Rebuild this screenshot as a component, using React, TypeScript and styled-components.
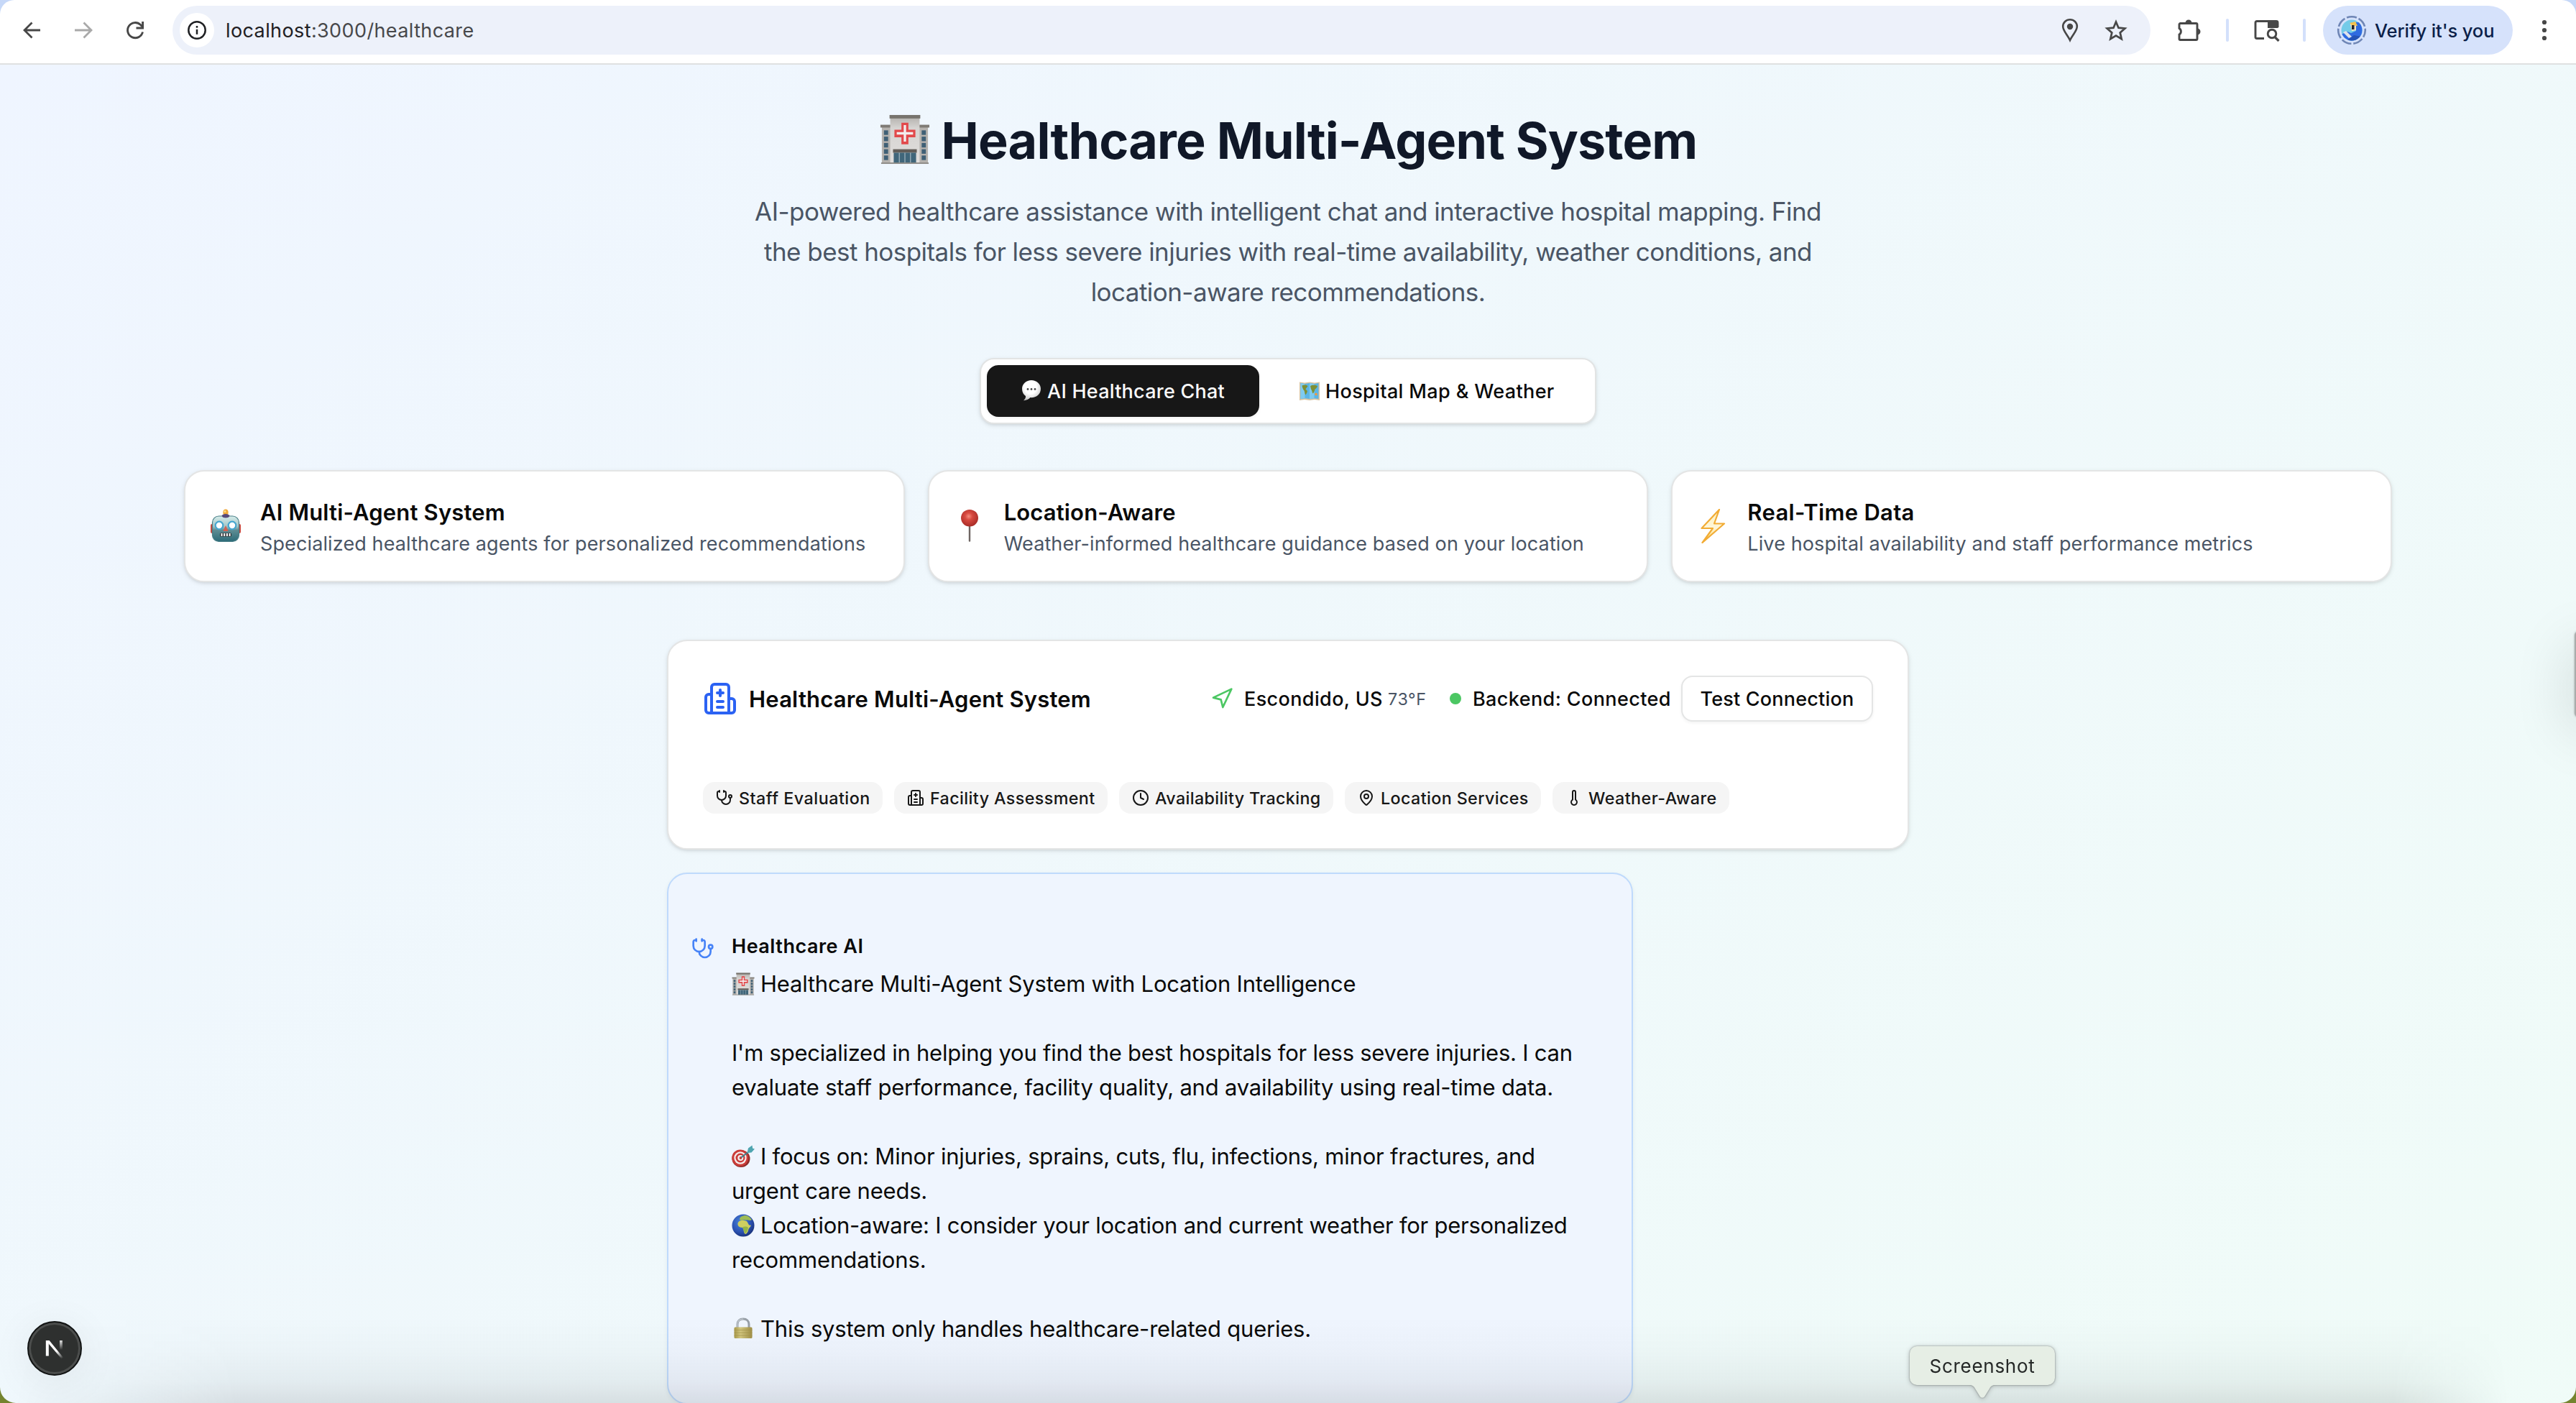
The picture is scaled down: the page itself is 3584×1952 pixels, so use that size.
import React from "react";
import styled, { createGlobalStyle } from "styled-components";
import { Stethoscope, Navigation, Clock, MapPin, Thermometer } from "lucide-react";

const GlobalStyle = createGlobalStyle`
  *, *::before, *::after { box-sizing: border-box; }
  html, body { margin: 0; padding: 0; }
  body {
    width: 3584px;
    height: 1952px;
    overflow: hidden;
    background: #74842f;
    color: #0a0a0a;
    font-family: Inter, "Liberation Sans", Arial, sans-serif;
  }
  h1, h2, h3, p { margin: 0; font-weight: inherit; font-size: inherit; }
  button { font: inherit; color: inherit; }
  svg { display: block; flex: none; }
`;

/* ---------- browser window ---------- */

const Backdrop = styled.div`
  height: 1952px;
  background: linear-gradient(#c6d8f8 0 200px, #74842f 200px);
`;

const Window = styled.div`
  position: relative;
  width: 3584px;
  height: 1952px;
  border-radius: 20px 20px 22px 22px;
  overflow: hidden;
  display: flex;
  flex-direction: column;
`;

const Toolbar = styled.header`
  flex: none;
  height: 90px;
  padding: 8px 40px 12px 0;
  background: #fff;
  border-bottom: 2px solid #dfe1e1;
  display: flex;
  align-items: center;
`;

const NavButtons = styled.div`
  width: 240px;
  padding-left: 28px;
  display: flex;
  align-items: center;
  gap: 40px;
`;

const AddressBar = styled.div`
  width: 2752px;
  height: 68px;
  border-radius: 34px;
  background: #edf1fa;
  padding: 0 32px 0 10px;
  display: flex;
  align-items: center;
`;

const SiteInfo = styled.span`
  width: 48px;
  height: 48px;
  border-radius: 50%;
  background: #fff;
  display: grid;
  place-items: center;
`;

const Url = styled.div`
  flex: 1;
  margin-left: 16px;
  font-size: 27px;
  letter-spacing: 0.39px;
  white-space: pre;
  color: #1f2023;
  span { color: #47484b; }
`;

const AddressActions = styled.div`
  display: flex;
  align-items: center;
  gap: 36px;
`;

const Extensions = styled.div`
  flex: 1;
  padding-left: 36px;
  display: flex;
  align-items: center;
`;

const Separator = styled.span<{ $left: number; $right: number }>`
  width: 4px;
  height: 32px;
  border-radius: 2px;
  margin: 0 ${p => p.$right}px 0 ${p => p.$left}px;
  background: #d3e0fb;
`;

const VerifyPill = styled.div`
  width: 264px;
  height: 68px;
  border-radius: 34px;
  background: #d6e2fb;
  color: #0b1f49;
  padding-left: 19px;
  display: flex;
  align-items: center;
  gap: 11px;
  font-size: 25.5px;
  font-weight: 500;
  letter-spacing: -0.1px;
  white-space: nowrap;
`;

/* ---------- page ---------- */

const Page = styled.main`
  flex: none;
  height: 2900px;
  padding-top: 64px;
  background: linear-gradient(to bottom right, #eff5ff, #f0fdf6);
  display: flex;
  flex-direction: column;
  align-items: center;
`;

const Title = styled.h1`
  height: 80px;
  line-height: 84px;
  margin-bottom: 32px;
  display: flex;
  font-size: 70px;
  font-weight: 700;
  letter-spacing: -0.84px;
  color: #101828;
  white-space: nowrap;
`;

const TitleEmoji = styled.span`
  width: 72px;
  margin-right: 15px;
  display: grid;
  place-items: center;
`;

const Lead = styled.p`
  font-size: 35px;
  line-height: 56px;
  letter-spacing: -0.545px;
  color: #4a5565;
  text-align: center;
  white-space: pre-line;
`;

const Tabs = styled.nav`
  height: 92px;
  margin: 64px 0;
  padding: 8px;
  border: 2px solid #e2e4e4;
  border-radius: 20px;
  background: #fff;
  box-shadow: 0 2px 6px rgba(0, 0, 0, 0.1), 0 2px 4px -2px rgba(0, 0, 0, 0.1);
  display: flex;
  gap: 8px;
`;

const Tab = styled.button<{ $active?: boolean; $width: number; $track: number }>`
  width: ${p => p.$width}px;
  height: 72px;
  padding: 0 0 0 48px;
  border: 0;
  border-radius: 16px;
  background: ${p => (p.$active ? "#171717" : "transparent")};
  color: ${p => (p.$active ? "#fafafa" : "#0a0a0a")};
  box-shadow: ${p => (p.$active ? "0 2px 4px rgba(0, 0, 0, 0.06)" : "none")};
  display: flex;
  align-items: center;
  gap: 8px;
  font-size: 27px;
  font-weight: 500;
  letter-spacing: ${p => p.$track}px;
  white-space: nowrap;
`;

const Features = styled.section`
  width: 3072px;
  display: grid;
  grid-template-columns: repeat(3, 1fr);
  gap: 32px;
  margin-bottom: 80px;
`;

const Card = styled.section`
  border: 2px solid #e4e5e5;
  border-radius: 28px;
  background: #fff;
  box-shadow: 0 2px 6px rgba(0, 0, 0, 0.1), 0 2px 4px -2px rgba(0, 0, 0, 0.1);
`;

const FeatureCard = styled(Card)`
  height: 156px;
  padding: 32px;
  display: flex;
  align-items: center;
  gap: 24px;
`;

const FeatureCopy = styled.div`
  padding-top: 2px;
`;

const FeatureTitle = styled.h3<{ $track: number }>`
  font-size: 31px;
  line-height: 48px;
  font-weight: 600;
  letter-spacing: ${p => p.$track}px;
`;

const FeatureText = styled.p`
  font-size: 27px;
  line-height: 40px;
  letter-spacing: 0.12px;
  color: #4a5565;
  white-space: nowrap;
`;

const Column = styled.div`
  width: 1728px;
  display: flex;
  flex-direction: column;
  gap: 32px;
`;

const SystemCard = styled(Card)`
  height: 292px;
  padding: 48px;
  display: flex;
  flex-direction: column;
  justify-content: space-between;
`;

const SystemHeader = styled.div`
  height: 64px;
  display: flex;
  align-items: center;
  justify-content: space-between;
`;

const Group = styled.div<{ $gap: number }>`
  display: flex;
  align-items: center;
  gap: ${p => p.$gap}px;
`;

const BlueIcon = styled.span`
  color: #2b62f3;
`;

const SystemTitle = styled.h2`
  font-size: 31px;
  font-weight: 600;
  letter-spacing: 0.19px;
  white-space: nowrap;
`;

const Status = styled.span<{ $width: number; $track: number }>`
  width: ${p => p.$width}px;
  font-size: 27px;
  font-weight: 500;
  letter-spacing: ${p => p.$track}px;
  white-space: nowrap;
`;

const Temperature = styled.span`
  width: 54px;
  font-size: 23.3px;
  letter-spacing: 0.6px;
  color: #4a5565;
`;

const Dot = styled.span`
  width: 16px;
  height: 16px;
  margin: 0 16px 0 32px;
  border-radius: 50%;
  background: #4cc763;
`;

const TestButton = styled.button`
  width: 267px;
  height: 64px;
  margin-left: 15px;
  padding: 0;
  border: 2px solid #e4e5e5;
  border-radius: 16px;
  background: #fff;
  box-shadow: 0 2px 4px rgba(0, 0, 0, 0.05);
  font-size: 27px;
  font-weight: 500;
  letter-spacing: 0.2px;
`;

const Badge = styled.span<{ $width: number; $track: number }>`
  width: ${p => p.$width}px;
  height: 44px;
  padding-left: 18px;
  border-radius: 16px;
  background: #f5f5f5;
  color: #171717;
  display: flex;
  align-items: center;
  gap: 8px;
  font-size: 23.3px;
  font-weight: 500;
  letter-spacing: ${p => p.$track}px;
  white-space: nowrap;
`;

const MessageCard = styled.article`
  width: 1344px;
  height: 740px;
  padding: 81px 32px 80px;
  border: 2px solid #bfdafc;
  border-radius: 28px;
  background: #eff5fe;
  box-shadow: 0 2px 6px rgba(0, 0, 0, 0.06);
  display: flex;
  align-items: flex-start;
  gap: 24px;
`;

const MessageIcon = styled.span`
  padding-top: 7px;
  color: #4783f7;
`;

const Author = styled.h3`
  margin-bottom: 8px;
  font-size: 27px;
  line-height: 40px;
  font-weight: 600;
  letter-spacing: 0.5px;
`;

const Line = styled.p<{ $track?: number }>`
  height: 48px;
  display: flex;
  align-items: center;
  gap: 8px;
  font-size: 31px;
  line-height: 48px;
  letter-spacing: ${p => p.$track ?? -0.21}px;
  white-space: nowrap;
`;

/* ---------- overlays ---------- */

const BottomShade = styled.div`
  position: absolute;
  left: 0;
  bottom: 0;
  width: 3584px;
  height: 120px;
  background: linear-gradient(to bottom, rgba(20, 25, 30, 0), rgba(20, 25, 30, 0.02) 40%, rgba(20, 25, 30, 0.055) 75%, rgba(20, 25, 30, 0.11));
  mask-image: linear-gradient(to right, transparent 20px, #000 330px, #000 3330px, transparent 3490px);
`;

const DevBadge = styled.div`
  position: absolute;
  left: 38px;
  top: 1838px;
  width: 76px;
  height: 76px;
  border-radius: 50%;
  border: 2px solid #121414;
  background: #2e302f;
  box-shadow: inset 0 0 0 3px #4c4e4d, 0 8px 60px rgba(0, 0, 0, 0.07);
  display: grid;
  place-items: center;
`;

const SideSliver = styled.div`
  position: absolute;
  left: 3582px;
  top: 878px;
  width: 40px;
  height: 120px;
  border-radius: 6px;
  background: #a9acab;
  box-shadow: 0 0 3px rgba(0, 0, 0, 0.3), 0 20px 80px rgba(0, 0, 0, 0.18);
`;

const Tooltip = styled.div`
  position: absolute;
  left: 2657px;
  top: 1873px;
  width: 202px;
  filter: drop-shadow(0 0 1px rgba(0, 0, 0, 0.35)) drop-shadow(0 1px 3px rgba(0, 0, 0, 0.25));
  display: flex;
  flex-direction: column;
  align-items: center;
`;

const TooltipBody = styled.div`
  width: 202px;
  height: 54px;
  border-radius: 10px;
  background: #e6eee5;
  color: #252827;
  font-size: 26px;
  letter-spacing: 0.7px;
  display: grid;
  place-items: center;
`;

/* ---------- emoji drawings ---------- */

const HospitalEmoji = ({ size }: { size: number }) => (
  <svg width={size} height={size} viewBox="0 0 72 72">
    <defs>
      <linearGradient id="wall" x1="0" y1="0" x2="0" y2="1">
        <stop offset="0" stopColor="#b3b0ac" /><stop offset=".25" stopColor="#d6d4d2" /><stop offset="1" stopColor="#e0dedc" />
      </linearGradient>
    </defs>
    <rect x="3" y="17" width="66" height="53" fill="#b5b2ae" />
    <rect x="1" y="15" width="70" height="4" fill="#7f7b75" />
    <rect x="15" y="3" width="42" height="67" fill="url(#wall)" />
    <rect x="14" y="1" width="44" height="5" fill="#77736d" />
    {[23, 32, 41, 50, 59].map(y => (
      <g key={y} fill="#3f6076">
        <rect x="6" y={y} width="6" height="6.5" /><rect x="60" y={y} width="6" height="6.5" />
      </g>
    ))}
    <path d="M31 12h10v10h10v11H41v10H31V33H21V22h10z" fill="#e2494b" />
    <path d="M34.300 15.500h3.400v10h10v3.600h-10v10h-3.400v-10h-10v-3.600h10z" fill="#f3eeee" />
    <rect x="19" y="50" width="34" height="5" fill="#625d58" />
    <rect x="20" y="55" width="32" height="15" fill="#40667a" />
    <path d="M28 55v15M36 55v15M44 55v15" stroke="#9fb4be" strokeWidth="1.3" />
    <rect x="2" y="69" width="68" height="2" fill="#8f8c88" />
  </svg>
);

const ChatEmoji = () => (
  <svg width="28" height="30" viewBox="0 0 28 30">
    <defs>
      <radialGradient id="bubble" cx=".45" cy=".35" r=".65">
        <stop offset=".5" stopColor="#fff" /><stop offset="1" stopColor="#c4c4c4" />
      </radialGradient>
    </defs>
    <path d="M14 0C6.800 0 1 5 1 12c0 4.500 2 8 5 10 .3 2.200-.8 4.500-3 6.200 4 0 7.500-1.500 9.400-4.100C21 24.600 27 19.500 27 12 27 5 21.200 0 14 0z" fill="url(#bubble)" />
    <circle cx="9" cy="12.500" r="1.400" fill="#4a4a4a" /><circle cx="14" cy="12.500" r="1.400" fill="#4a4a4a" /><circle cx="19" cy="12.500" r="1.400" fill="#4a4a4a" />
  </svg>
);

const MapEmoji = () => (
  <svg width="28" height="28" viewBox="0 0 28 28">
    <path d="M0 1.500l7 1 7-1 7 1 7-1V27l-7-1-7 1-7-1L0 27z" fill="#d9c3a0" />
    <path d="M1.500 3l6 1L14 3l6.500 1 6-1v22l-6-.8L14 25l-6.500-.8-6 .8z" fill="#5cb5e6" />
    <path d="M7.500 4v20.200l-6 .8V3zM20.500 4v20.200L14 25V3z" fill="#7fcbf0" />
    <path d="M3.500 6.500c3-1.500 6-1 8 .5-.5 2-2.500 2.500-3 4.500l2.500 2.500c-.5 2.500-1.500 4-2.500 5.500-1.500-2-1-4-2-6-1.500-1.500-2.500-4-3-7zM15 7c3-2 7-1.500 10 0-.5 2.500-2 3.500-3.500 4.500-.5 2.500-1.500 5-3 6-1-2-1-4.500-2.500-6z" fill="#7d8f35" />
    <circle cx="23" cy="18.500" r="1.800" fill="#f09a3e" />
  </svg>
);

const RobotEmoji = () => (
  <svg width="48" height="48" viewBox="0 0 48 48">
    <defs>
      <linearGradient id="head" x1="0" y1="0" x2="0" y2="1">
        <stop offset="0" stopColor="#d5ecea" /><stop offset=".4" stopColor="#a5c6c8" /><stop offset=".55" stopColor="#5f8d93" /><stop offset="1" stopColor="#2c6b78" />
      </linearGradient>
    </defs>
    <rect x="3" y="21" width="4" height="13" rx="2" fill="#c8493f" /><rect x="41" y="21" width="4" height="13" rx="2" fill="#c8493f" />
    <ellipse cx="24" cy="5" rx="3.700" ry="4.500" fill="#f0a93a" /><circle cx="23" cy="3.500" r="1.500" fill="#fbe08c" />
    <rect x="5.500" y="10" width="37" height="35.500" rx="9" fill="url(#head)" stroke="#4a7f88" strokeWidth="1.200" />
    <path d="M18.500 9q5.500-4 11 0-.5 3.500-5.500 3.500T18.500 9z" fill="#57497b" />
    <circle cx="15" cy="23" r="5.300" fill="#fff" stroke="#46a6cf" strokeWidth="2.200" /><circle cx="33" cy="23" r="5.300" fill="#fff" stroke="#46a6cf" strokeWidth="2.200" />
    <path d="M24 23l3.500 8h-7z" fill="#d55f50" />
    <rect x="16" y="33.500" width="16" height="5" rx="1.500" fill="#2b2c2e" />
    <path d="M18.500 34v4M22.200 34v4M25.900 34v4M29.600 34v4" stroke="#f2f2f2" strokeWidth="2.200" />
  </svg>
);

const PinEmoji = () => (
  <svg width="48" height="48" viewBox="0 0 48 48">
    <defs>
      <radialGradient id="pin" cx=".45" cy=".4" r=".6">
        <stop offset="0" stopColor="#f58b7d" /><stop offset=".35" stopColor="#d84a40" /><stop offset="1" stopColor="#a92c27" />
      </radialGradient>
    </defs>
    <path d="M24 22v22.500" stroke="#6f6663" strokeWidth="2.400" strokeLinecap="round" />
    <path d="M24 1c6.800 0 12 5 12 11.500C36 18 32 24.500 24 24.500S12 18 12 12.500C12 6 17.200 1 24 1z" fill="url(#pin)" />
  </svg>
);

const BoltEmoji = () => (
  <svg width="48" height="48" viewBox="0 0 48 48">
    <defs>
      <linearGradient id="bolt" x1="0" y1="0" x2="0" y2="1">
        <stop offset=".1" stopColor="#fdf3c6" /><stop offset=".55" stopColor="#fef6d8" /><stop offset="1" stopColor="#fbd65a" />
      </linearGradient>
    </defs>
    <path d="M33 1L8.500 27H24L9.500 47 40 20.500H26z" fill="url(#bolt)" stroke="#f2ac35" strokeWidth="2.200" strokeLinejoin="round" />
  </svg>
);

const TargetEmoji = () => (
  <svg width="32" height="32" viewBox="0 0 32 32">
    <ellipse cx="13" cy="19" rx="12.500" ry="12" fill="#8d2c2a" />
    <ellipse cx="11.800" cy="18" rx="11.500" ry="11.500" fill="#cb3c38" />
    <ellipse cx="12" cy="18" rx="8.700" ry="8.700" fill="#f4eceb" />
    <ellipse cx="12" cy="18" rx="6.500" ry="6.400" fill="#c93c39" />
    <ellipse cx="12.300" cy="18" rx="4" ry="3.900" fill="#f4eceb" />
    <circle cx="12.500" cy="18" r="1.900" fill="#c93c39" />
    <path d="M13 17.500L25 8.500" stroke="#3f7f8a" strokeWidth="2" />
    <path d="M21.500 11l1.500-6.500L28.500.500l.7 4.300 2.800.700-4.500 5z" fill="#4fa5b0" />
  </svg>
);

const GlobeEmoji = () => (
  <svg width="32" height="32" viewBox="0 0 32 32">
    <defs>
      <radialGradient id="sea" cx=".4" cy=".35" r=".65">
        <stop offset="0" stopColor="#4a85dc" /><stop offset=".7" stopColor="#2a50b0" /><stop offset="1" stopColor="#1b3680" />
      </radialGradient>
    </defs>
    <circle cx="16" cy="16" r="15.500" fill="url(#sea)" />
    <path d="M8.500 13c.8-3 3.500-4.200 6.500-4 3 0 6 .2 7 2.700l2 3.500c1 .5 2.500.3 3 .6-.5 2.400-3.200 3.600-3.700 5.900-.5 3-2 5.800-4.300 6.300-2-1-2.200-4-2.500-6-.2-2-1-3-2.800-3.200C10.500 18.600 8 16.500 8.500 13z" fill="#cfcf60" />
    <path d="M15 18.500c2.500-1.500 6.500-1.500 8 .5-.3 3-1.500 6.300-4 8.200-1.500-1-2.500-5.700-4-8.700z" fill="#94b548" />
    <path d="M11 7.300c0-3 4-5.300 8.500-5.300 3.500.6 6.500 3 8.500 6-1.500 1.500-4 1-6 .2-2 .8-4-.7-5.500.3-1.500.6-5 .8-5.500-1.200z" fill="#9dbb55" />
  </svg>
);

const LockEmoji = () => (
  <svg width="32" height="32" viewBox="0 0 32 32">
    <defs>
      <linearGradient id="lock" x1="0" y1="0" x2="1" y2="0">
        <stop offset="0" stopColor="#a89849" /><stop offset=".35" stopColor="#d3c77f" /><stop offset="1" stopColor="#a08f46" />
      </linearGradient>
    </defs>
    <path d="M8 15V9.500C8 4.900 11 2 16 2s8 2.900 8 7.500V15" fill="none" stroke="#98a0a8" strokeWidth="3" />
    <path d="M8 15V9.500C8 4.900 11 2 16 2" fill="none" stroke="#c7ced4" strokeWidth="1.200" />
    <rect x="3.500" y="13.500" width="25" height="15.500" rx="1.500" fill="url(#lock)" />
    <path d="M3.500 17.500h25M3.500 21.200h25M3.500 25h25" stroke="#a3934a" strokeWidth=".7" />
  </svg>
);

/* ---------- interface icons ---------- */

const BuildingIcon = ({ size }: { size: number }) => (
  <svg width={size} height={size} viewBox="0 0 24 24" fill="none" stroke="currentColor" strokeWidth="2" strokeLinecap="round" strokeLinejoin="round">
    <path d="M12 6v4M14 14h-4M14 18h-4M14 8h-4" />
    <path d="M18 12h2a2 2 0 0 1 2 2v6a2 2 0 0 1-2 2H4a2 2 0 0 1-2-2v-9a2 2 0 0 1 2-2h2" />
    <path d="M18 22V4a2 2 0 0 0-2-2H8a2 2 0 0 0-2 2v18" />
  </svg>
);

const ArrowIcon = ({ color, flip }: { color: string; flip?: boolean }) => (
  <svg width="32" height="32" viewBox="0 0 32 32" fill="none" stroke={color} strokeWidth="2.800">
    <path d={flip ? "M4 16h22M16.500 5.500L27 16 16.500 26.500" : "M28 16H6M16.500 5.500L6 16l10.500 10.500"} />
  </svg>
);

const ReloadIcon = () => (
  <svg width="32" height="32" viewBox="0 0 32 32" fill="none" stroke="#474747" strokeWidth="2.900">
    <path d="M26.500 18.500A10.600 10.600 0 1 1 23.500 8.500l3 3" /><path d="M26.600 4v9H17.500" />
  </svg>
);

const InfoIcon = () => (
  <svg width="28" height="28" viewBox="0 0 28 28" fill="none" stroke="#1f2023" strokeWidth="2.500">
    <circle cx="14" cy="14" r="11.700" /><path d="M14 12.800v7" /><path d="M14 8v2.700" />
  </svg>
);

const PlaceIcon = () => (
  <svg width="24" height="34" viewBox="0 0 24 34">
    <path d="M12 2.200c5.500 0 9.800 4.200 9.800 9.600C21.800 18 16 22.500 12 31 8 22.500 2.200 18 2.200 11.800 2.200 6.400 6.500 2.200 12 2.200z" fill="none" stroke="#474747" strokeWidth="2.600" />
    <circle cx="12" cy="12" r="4.200" fill="#474747" />
  </svg>
);

const StarIcon = () => (
  <svg width="32" height="32" viewBox="0 0 32 32">
    <path d="M16 4.500l3.500 8.200 8.900.8-6.700 5.900 2 8.700-7.700-4.600-7.700 4.600 2-8.700-6.700-5.900 8.900-.8z" fill="none" stroke="#474747" strokeWidth="2.700" />
  </svg>
);

const PuzzleIcon = () => (
  <svg width="36" height="36" viewBox="0 0 36 36">
    <path d="M5.500 8.500h22a1.500 1.500 0 0 1 1.500 1.500v20a1.500 1.500 0 0 1-1.500 1.500h-22a1.500 1.500 0 0 1-1.500-1.500v-6a5 5 0 0 0 0-8.500V10a1.500 1.500 0 0 1 1.500-1.500z" fill="none" stroke="#474747" strokeWidth="2.900" />
    <path d="M12.500 8a4.500 4.500 0 0 1 9 0zM29 15.500a4.500 4.500 0 0 1 0 9z" fill="#474747" />
  </svg>
);

const PanelSearchIcon = () => (
  <svg width="38" height="32" viewBox="0 0 38 32">
    <path d="M15 27.500H5A2 2 0 0 1 3 25.500V5.500a2 2 0 0 1 2-2h27a2 2 0 0 1 2 2V12" fill="none" stroke="#474747" strokeWidth="2.900" />
    <path d="M20 3h14.500v10H20z" fill="#474747" />
    <circle cx="26" cy="21" r="5.800" fill="#fff" stroke="#474747" strokeWidth="2.900" />
    <path d="M30 25.500l5.500 5.500" stroke="#474747" strokeWidth="3.200" />
  </svg>
);

const AvatarIcon = () => (
  <svg width="42" height="42" viewBox="0 0 42 42">
    <circle cx="21" cy="21" r="18.800" fill="none" stroke="#6f86b5" strokeWidth="2.600" strokeDasharray="14 3" strokeDashoffset="4" />
    <clipPath id="face"><circle cx="21" cy="21" r="14.500" /></clipPath>
    <g clipPath="url(#face)">
      <rect width="42" height="42" fill="#74cbe8" />
      <path d="M27 10h12v28H6V27l9-4 5 2 7-3z" fill="#2f6be0" />
      <path d="M16 34l8-6 12 2v8H14z" fill="#2453b5" />
      <path d="M19 12l7-1 1 4v6l-6 1z" fill="#f4e3c2" />
      <path d="M18 11l8-2 3 6-8-1z" fill="#f3c14f" />
      <path d="M21 14h3.500v6H21z" fill="#22252c" />
      <path d="M9 24l4-2 8 8-4 2z" fill="#dfe3ea" />
    </g>
  </svg>
);

const MoreIcon = () => (
  <svg width="8" height="30" viewBox="0 0 8 30" fill="#474747">
    <circle cx="4" cy="4" r="3.100" /><circle cx="4" cy="15" r="3.100" /><circle cx="4" cy="26" r="3.100" />
  </svg>
);

const FrameworkMark = () => (
  <svg width="28" height="30" viewBox="0 0 28 30">
    <defs>
      <linearGradient id="diag" x1="12" y1="12" x2="25" y2="29" gradientUnits="userSpaceOnUse">
        <stop offset=".4" stopColor="#fff" /><stop offset="1" stopColor="#fff" stopOpacity="0" />
      </linearGradient>
      <linearGradient id="stem" x1="0" y1="2" x2="0" y2="17" gradientUnits="userSpaceOnUse">
        <stop offset="0" stopColor="#fff" /><stop offset="1" stopColor="#fff" stopOpacity="0" />
      </linearGradient>
    </defs>
    <rect x="1.800" y="4" width="4" height="21.500" fill="#fff" />
    <path d="M1.800 4h4.800L27 29l-2.500 1.500z" fill="url(#diag)" />
    <rect x="21" y="4" width="3.800" height="15" fill="url(#stem)" />
  </svg>
);

/* ---------- content ---------- */

const features = [
  { icon: <RobotEmoji />, title: "AI Multi-Agent System", track: 0.17, text: "Specialized healthcare agents for personalized recommendations" },
  { icon: <PinEmoji />, title: "Location-Aware", track: 0.14, text: "Weather-informed healthcare guidance based on your location" },
  { icon: <BoltEmoji />, title: "Real-Time Data", track: 0.3, text: "Live hospital availability and staff performance metrics" },
];

const badges = [
  { icon: <Stethoscope size={24} />, label: "Staff Evaluation", width: 250, track: 0.5 },
  { icon: <BuildingIcon size={24} />, label: "Facility Assessment", width: 297, track: 0.39 },
  { icon: <Clock size={24} />, label: "Availability Tracking", width: 298, track: 0.35 },
  { icon: <MapPin size={24} />, label: "Location Services", width: 273, track: 0.38 },
  { icon: <Thermometer size={24} />, label: "Weather-Aware", width: 246, track: 0.45 },
];

const message: { icon?: React.ReactNode; text: string; track?: number }[] = [
  { icon: <HospitalEmoji size={32} />, text: "Healthcare Multi-Agent System with Location Intelligence" },
  { text: "" },
  { text: "I'm specialized in helping you find the best hospitals for less severe injuries. I can", track: -0.24 },
  { text: "evaluate staff performance, facility quality, and availability using real-time data." },
  { text: "" },
  { icon: <TargetEmoji />, text: "I focus on: Minor injuries, sprains, cuts, flu, infections, minor fractures, and" },
  { text: "urgent care needs." },
  { icon: <GlobeEmoji />, text: "Location-aware: I consider your location and current weather for personalized", track: -0.26 },
  { text: "recommendations.", track: -0.12 },
  { text: "" },
  { icon: <LockEmoji />, text: "This system only handles healthcare-related queries." },
];

export default function App() {
  return (
    <Backdrop>
      <GlobalStyle />
      <Window>
        <Toolbar>
          <NavButtons>
            <ArrowIcon color="#474747" />
            <ArrowIcon color="#a9a9a9" flip />
            <ReloadIcon />
          </NavButtons>
          <AddressBar>
            <SiteInfo><InfoIcon /></SiteInfo>
            <Url>localhost<span>:3000/healthcare</span></Url>
            <AddressActions>
              <PlaceIcon />
              <StarIcon />
            </AddressActions>
          </AddressBar>
          <Extensions>
            <PuzzleIcon />
            <Separator $left={33} $right={34} />
            <PanelSearchIcon />
            <Separator $left={31} $right={24} />
            <VerifyPill><AvatarIcon />Verify it's you</VerifyPill>
          </Extensions>
          <MoreIcon />
        </Toolbar>

        <Page>
          <Title><TitleEmoji><HospitalEmoji size={70} /></TitleEmoji>Healthcare Multi-Agent System</Title>
          <Lead>
            {"AI-powered healthcare assistance with intelligent chat and interactive hospital mapping. Find\nthe best hospitals for less severe injuries with real-time availability, weather conditions, and\nlocation-aware recommendations."}
          </Lead>

          <Tabs>
            <Tab $active $width={379} $track={0.24}><ChatEmoji />AI Healthcare Chat</Tab>
            <Tab $width={451} $track={0.36}><MapEmoji />Hospital Map &amp; Weather</Tab>
          </Tabs>

          <Features>
            {features.map(f => (
              <FeatureCard key={f.title}>
                {f.icon}
                <FeatureCopy>
                  <FeatureTitle $track={f.track}>{f.title}</FeatureTitle>
                  <FeatureText>{f.text}</FeatureText>
                </FeatureCopy>
              </FeatureCard>
            ))}
          </Features>

          <Column>
            <SystemCard>
              <SystemHeader>
                <Group $gap={16}>
                  <BlueIcon><BuildingIcon size={48} /></BlueIcon>
                  <SystemTitle>Healthcare Multi-Agent System</SystemTitle>
                </Group>
                <Group $gap={0}>
                  <Group $gap={15}>
                    <Navigation size={32} color="#4cc763" />
                    <Status $width={185} $track={0.38}>Escondido, US</Status>
                    <Temperature>73°F</Temperature>
                  </Group>
                  <Dot />
                  <Status $width={275} $track={0.39}>Backend: Connected</Status>
                  <TestButton>Test Connection</TestButton>
                </Group>
              </SystemHeader>
              <Group $gap={16}>
                {badges.map(b => (
                  <Badge key={b.label} $width={b.width} $track={b.track}>{b.icon}{b.label}</Badge>
                ))}
              </Group>
            </SystemCard>

            <MessageCard>
              <MessageIcon><Stethoscope size={32} /></MessageIcon>
              <div>
                <Author>Healthcare AI</Author>
                {message.map((m, i) => (
                  <Line key={i} $track={m.track}>{m.icon}{m.text}</Line>
                ))}
              </div>
            </MessageCard>
          </Column>
        </Page>

        <BottomShade />
        <DevBadge><FrameworkMark /></DevBadge>
        <SideSliver />
        <Tooltip>
          <TooltipBody>Screenshot</TooltipBody>
          <svg width="36" height="18" viewBox="0 0 36 18"><path d="M2 0h32c-3 1-4.500 2-6 5l-6.500 10.500c-2 3-5 3-7 0L8 5C6.500 2 5 1 2 0z" fill="#e6eee5" /></svg>
        </Tooltip>
      </Window>
    </Backdrop>
  );
}
